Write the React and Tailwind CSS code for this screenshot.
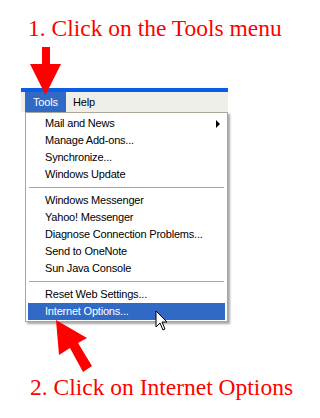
const items = [
  { label: "Mail and News", sub: true },
  { label: "Manage Add-ons..." },
  { label: "Synchronize..." },
  { label: "Windows Update" },
  { sep: true },
  { label: "Windows Messenger" },
  { label: "Yahoo! Messenger" },
  { label: "Diagnose Connection Problems..." },
  { label: "Send to OneNote" },
  { label: "Sun Java Console" },
  { sep: true },
  { label: "Reset Web Settings..." },
  { label: "Internet Options...", active: true },
]

function MenuRow({ label, sub, active }) {
  return (
    <div
      className={
        "h-[17px] flex items-center justify-between pl-[17px] pr-[5px] " +
        (active ? "bg-[#316ac5] text-white" : "text-black")
      }
    >
      <span>{label}</span>
      {sub && (
        <svg width="4" height="8" viewBox="0 0 4 8">
          <polygon points="0,0 4,4 0,8" fill="#000" />
        </svg>
      )}
    </div>
  )
}

export default function App() {
  return (
    <div className="relative w-[320px] h-[418px] bg-white overflow-hidden">
      <h1 className="pt-[16px] pl-[28px] text-[23.5px] leading-[24px] text-[#ff0000] font-['Liberation_Serif',serif] font-normal whitespace-nowrap">
        1. Click on the Tools menu
      </h1>

      <div className="mt-[48px] ml-[21px] w-[207px] font-['Liberation_Sans',Arial,sans-serif] text-[11px] tracking-[-0.2px]">
        <div className="h-[4px] bg-[#0a5de8]" />
        <div className="h-[20px] bg-[#efefea] flex items-stretch pl-[4px]">
          <div className="w-[41px] bg-[#316ac5] text-white flex items-center pl-[8px]">Tools</div>
          <div className="flex items-center pl-[7px] text-black">Help</div>
        </div>
        <div className="ml-[4px] w-[203px] bg-white border border-[#aca899] pt-[2px] pb-[1px] px-[2px] shadow-[2px_2px_2px_rgba(0,0,0,0.35)]">
          {items.map((it, i) =>
            it.sep ? (
              <div key={i} className="h-[9px] flex items-center px-[1px]">
                <div className="h-px w-full bg-[#aca899]" />
              </div>
            ) : (
              <MenuRow key={i} {...it} />
            )
          )}
        </div>
      </div>

      <p className="mt-[53px] pl-[30px] text-[23.5px] leading-[24px] text-[#ff0000] font-['Liberation_Serif',serif] whitespace-nowrap">
        2. Click on Internet Options
      </p>

      {/* red arrows + cursor drawn over the menu */}
      <svg className="absolute inset-0 pointer-events-none" width="320" height="418" viewBox="0 0 320 418">
        <polygon points="42,47 50,47 50,64 61,64 45.5,95 30,64 42,64" fill="#ff0000" />
        <polygon points="56,320 87,338 78,343 92,366 83,372 70,348 59,355" fill="#ff0000" />
        <polygon
          points="156,311 156,327 160,323 163,330 165,329 162,322 167,322"
          fill="#fff"
          stroke="#000"
          strokeWidth="1"
          strokeLinejoin="miter"
        />
      </svg>
    </div>
  )
}
